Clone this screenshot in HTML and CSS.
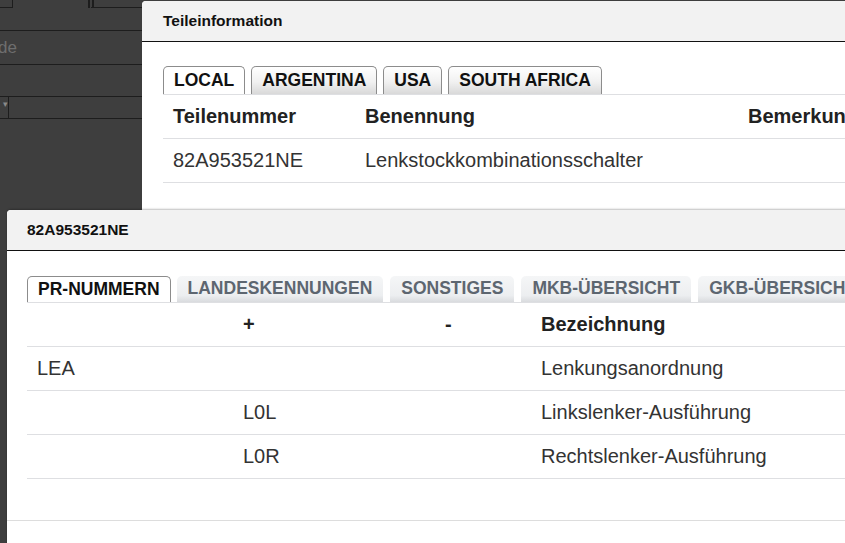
FILE: index.html
```html
<!DOCTYPE html>
<html lang="de">
<head>
    <meta charset="UTF-8">
    <meta name="viewport" content="width=device-width, initial-scale=1.0">
    <title>Teileinformation</title>
    <link rel="stylesheet" href="styles.css">
</head>
<body>
    <!-- Hintergrund: Formular hinter den Dialogen -->
    <div class="bg-form">
        <div class="bg-row bg-row-top">
            <span class="stub stub-a"></span>
            <span class="stub stub-b"></span>
        </div>
        <div class="bg-row bg-row-text"><span class="bg-label">de</span></div>
        <div class="bg-row bg-row-empty"></div>
        <div class="bg-row bg-row-select">
            <span class="select-stub">&#9662;</span>
        </div>
    </div>

    <!-- Dialog 1 -->
    <div class="dialog dialog-parts">
        <div class="dialog-head">Teileinformation</div>
        <div class="dialog-body">
            <ul class="tabs tabs-classic">
                <li class="tab active">LOCAL</li>
                <li class="tab">ARGENTINA</li>
                <li class="tab">USA</li>
                <li class="tab">SOUTH AFRICA</li>
            </ul>
            <table class="grid grid-parts">
                <tr>
                    <th class="c-nr">Teilenummer</th>
                    <th class="c-name">Benennung</th>
                    <th>Bemerkung</th>
                </tr>
                <tr>
                    <td>82A953521NE</td>
                    <td>Lenkstockkombinationsschalter</td>
                    <td></td>
                </tr>
            </table>
        </div>
    </div>

    <!-- Dialog 2 -->
    <div class="dialog dialog-pr">
        <div class="dialog-head">82A953521NE</div>
        <div class="dialog-body">
            <ul class="tabs tabs-flat">
                <li class="tab active">PR-NUMMERN</li>
                <li class="tab">LANDESKENNUNGEN</li>
                <li class="tab">SONSTIGES</li>
                <li class="tab">MKB-ÜBERSICHT</li>
                <li class="tab">GKB-ÜBERSICHT</li>
            </ul>
            <table class="grid grid-pr">
                <tr>
                    <th class="c-fam"></th>
                    <th class="c-plus">+</th>
                    <th class="c-minus">-</th>
                    <th>Bezeichnung</th>
                </tr>
                <tr>
                    <td>LEA</td>
                    <td></td>
                    <td></td>
                    <td>Lenkungsanordnung</td>
                </tr>
                <tr>
                    <td></td>
                    <td>L0L</td>
                    <td></td>
                    <td>Linkslenker-Ausführung</td>
                </tr>
                <tr>
                    <td></td>
                    <td>L0R</td>
                    <td></td>
                    <td>Rechtslenker-Ausführung</td>
                </tr>
            </table>
        </div>
        <div class="dialog-foot"></div>
    </div>
</body>
</html>
```

FILE: styles.css
```css
body {
    margin: 0;
    width: 845px;
    height: 543px;
    overflow: hidden;
    position: relative;
    background-color: #3e3e3e;
    font-family: "Liberation Sans", Arial, sans-serif;
}

/* Hintergrund */
.bg-row {
    border-bottom: 1px solid #1d1d1d;
    position: relative;
}
.bg-row-top {
    height: 30px;
    display: flex;
}
.stub {
    display: block;
    height: 7px;
    border-bottom: 1px solid #1d1d1d;
}
.stub-a {
    width: 12px;
    border-right: 1px solid #1d1d1d;
}
.stub-b {
    width: 54px;
    margin-left: 75px;
    border-left: 6px double #1d1d1d;
}
.bg-row-text {
    height: 33px;
    line-height: 33px;
    font-size: 17px;
    color: #6e6e6e;
    text-indent: -2px;
}
.bg-row-empty {
    height: 31px;
}
.bg-row-select {
    height: 21px;
}
.select-stub {
    display: block;
    width: 8px;
    height: 21px;
    border-right: 1px solid #1d1d1d;
    color: #8a8a8a;
    font-size: 9px;
    line-height: 14px;
    text-align: right;
}

/* Dialoge */
.dialog {
    position: absolute;
    background-color: #fff;
    border-radius: 4px 0 0 0;
    overflow: hidden;
}
.dialog-parts {
    left: 142px;
    top: 1px;
    width: 760px;
    height: 260px;
}
.dialog-pr {
    left: 7px;
    top: 210px;
    width: 880px;
    height: 340px;
    box-shadow: 0 -1px 2px rgba(0, 0, 0, 0.25);
}
.dialog-head {
    height: 40px;
    line-height: 40px;
    padding-left: 21px;
    background-color: #f2f2f2;
    border-bottom: 1px solid #111;
    font-size: 15.5px;
    font-weight: bold;
    color: #111;
}
.dialog-pr .dialog-head {
    padding-left: 20px;
}
.dialog-parts .dialog-body {
    padding: 24px 0 0 21px;
}
.dialog-pr .dialog-body {
    padding: 25px 0 41px 20px;
}
.dialog-foot {
    border-top: 1px solid #ddd;
}

/* Tabs */
.tabs {
    list-style: none;
    margin: 0;
    padding: 0;
    display: flex;
    border-bottom: 1px solid #dedfe2;
    white-space: nowrap;
}
.tab {
    font-size: 17.5px;
    font-weight: bold;
    padding: 0 10px;
    border-radius: 5px 5px 0 0;
    box-sizing: border-box;
}
.tabs-classic .tab {
    height: 28px;
    line-height: 27px;
    margin-right: 6px;
    border: 1px solid #8c8c8c;
    border-bottom: none;
    background: linear-gradient(#ffffff, #f1f1f1 55%, #d9d9d9);
    color: #111;
}
.tabs-flat .tab {
    height: 26px;
    line-height: 25px;
    margin-right: 7px;
    padding: 0 11px;
    background: linear-gradient(#f5f6f7, #eceef0 75%, #d9dbde);
    color: #5d6670;
}
.tabs .tab.active {
    background: #fff;
    color: #111;
    border: 1px solid #8c8c8c;
    border-bottom: none;
    padding: 0 10px;
}
.tabs-flat .tab.active {
    margin-right: 6px;
}

/* Tabellen */
.grid {
    border-collapse: collapse;
    font-size: 20px;
    color: #333;
    white-space: nowrap;
}
.grid th,
.grid td {
    height: 43px;
    padding: 0 10px;
    text-align: left;
    border-bottom: 1px solid #dedfe2;
}
.grid th {
    font-weight: bold;
    color: #222;
}
.grid-parts {
    width: 740px;
}
.grid-parts .c-nr {
    width: 172px;
}
.grid-parts .c-name {
    width: 363px;
}
.grid-pr {
    width: 860px;
}
.grid-pr .c-fam {
    width: 186px;
}
.grid-pr .c-plus {
    width: 182px;
}
.grid-pr .c-minus {
    width: 76px;
}
```
